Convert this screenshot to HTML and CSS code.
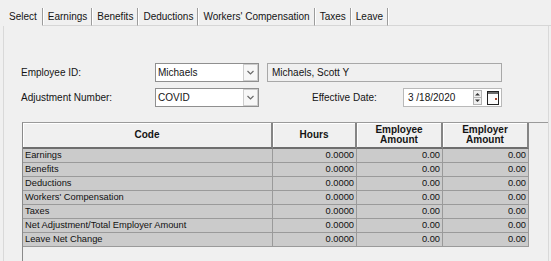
FILE: index.html
```html
<!DOCTYPE html>
<html>
<head>
<meta charset="utf-8">
<link rel="stylesheet" href="styles.css">
</head>
<body>
<div class="tabs">
  <div class="tab active">Select</div>
  <div class="tab">Earnings</div>
  <div class="tab">Benefits</div>
  <div class="tab">Deductions</div>
  <div class="tab">Workers' Compensation</div>
  <div class="tab">Taxes</div>
  <div class="tab">Leave</div>
  <div class="tab-rest"></div>
</div>
<div class="page">
  <div class="form-row">
    <div class="lbl">Employee ID:</div>
    <div class="combo">
      <span class="val">Michaels</span>
      <span class="dd"><svg width="13" height="15" viewBox="0 0 13 15"><polyline points="3.5,6 6.5,9 9.5,6" fill="none" stroke="#6a6a6a" stroke-width="1.2"/></svg></span>
    </div>
    <div class="name-field">Michaels, Scott Y</div>
  </div>
  <div class="form-row second">
    <div class="lbl">Adjustment Number:</div>
    <div class="combo">
      <span class="val">COVID</span>
      <span class="dd"><svg width="13" height="15" viewBox="0 0 13 15"><polyline points="3.5,6 6.5,9 9.5,6" fill="none" stroke="#6a6a6a" stroke-width="1.2"/></svg></span>
    </div>
    <div class="lbl-date">Effective Date:</div>
    <div class="date">
      <span class="val">3 /18/2020</span>
      <svg class="spin" width="9" height="15" viewBox="0 0 9 15"><rect x="0.5" y="0.5" width="8" height="14" fill="#f0f0f0" stroke="#b4b4b4"/><line x1="1" y1="7.5" x2="8" y2="7.5" stroke="#b4b4b4"/><polygon points="2,5.5 4.5,3 7,5.5" fill="#333"/><polygon points="2,9.5 4.5,12 7,9.5" fill="#333"/></svg>
      <svg class="cal" width="12" height="14" viewBox="0 0 12 14"><rect x="0.5" y="0.5" width="11" height="13" fill="#fbfbfb" stroke="#222"/><rect x="1" y="1" width="10" height="2" fill="#6a6a6a"/><rect x="8" y="7" width="2" height="2" fill="#a8442c"/></svg>
    </div>
  </div>
  <div class="grid-panel">
    <table class="grid">
      <colgroup>
        <col class="c-code"><col class="c-hours"><col class="c-amt"><col class="c-amt">
      </colgroup>
      <thead>
        <tr><th>Code</th><th>Hours</th><th>Employee<br>Amount</th><th>Employer<br>Amount</th></tr>
      </thead>
      <tbody>
        <tr><td>Earnings</td><td class="num">0.0000</td><td class="num">0.00</td><td class="num">0.00</td></tr>
        <tr><td>Benefits</td><td class="num">0.0000</td><td class="num">0.00</td><td class="num">0.00</td></tr>
        <tr><td>Deductions</td><td class="num">0.0000</td><td class="num">0.00</td><td class="num">0.00</td></tr>
        <tr><td>Workers' Compensation</td><td class="num">0.0000</td><td class="num">0.00</td><td class="num">0.00</td></tr>
        <tr><td>Taxes</td><td class="num">0.0000</td><td class="num">0.00</td><td class="num">0.00</td></tr>
        <tr><td>Net Adjustment/Total Employer Amount</td><td class="num">0.0000</td><td class="num">0.00</td><td class="num">0.00</td></tr>
        <tr><td>Leave Net Change</td><td class="num">0.0000</td><td class="num">0.00</td><td class="num">0.00</td></tr>
      </tbody>
    </table>
  </div>
</div>
</body>
</html>
```

FILE: styles.css
```css
html, body {
  margin: 0;
  padding: 0;
  background: #f0f0f0;
  width: 551px;
  height: 261px;
  overflow: hidden;
  font-family: "Liberation Sans", Arial, sans-serif;
  font-size: 10px;
  color: #141414;
}

.tabs {
  display: flex;
  padding-top: 8px;
  padding-left: 4px;
}
.tab {
  box-sizing: border-box;
  height: 18px;
  line-height: 17px;
  padding: 0 4px 0 5px;
  border-right: 1px solid #9c9c9c;
  box-shadow: 1px 0 0 #ffffff;
  border-bottom: 1px solid #d6d6d6;
  white-space: nowrap;
}
.tab.active {
  padding-right: 5px;
  border-bottom-color: transparent;
}
.tab-rest {
  flex: 1;
  height: 18px;
  box-sizing: border-box;
  border-bottom: 1px solid #d6d6d6;
}

.page {
  box-sizing: border-box;
  margin-left: 3px;
  width: 546px;
  height: 243px;
  border-left: 1px solid #d9d9d9;
  border-right: 1px solid #d9d9d9;
  padding: 37px 0 0 17px;
  display: flex;
  flex-direction: column;
}

.form-row {
  display: flex;
  align-items: center;
  height: 19px;
}
.form-row.second {
  margin-top: 6px;
}
.lbl {
  width: 134px;
}
.combo {
  box-sizing: border-box;
  width: 104px;
  height: 19px;
  background: #ffffff;
  border: 1px solid #8f8f8f;
  display: flex;
  align-items: center;
  justify-content: space-between;
  padding-left: 2px;
}
.combo .val {
  line-height: 15px;
}
.dd {
  box-sizing: border-box;
  width: 15px;
  height: 17px;
  border: 1px solid #cdcdcd;
  background: #f7f7f7;
  display: flex;
  align-items: center;
  justify-content: center;
}
.name-field {
  box-sizing: border-box;
  margin-left: 8px;
  width: 235px;
  height: 19px;
  line-height: 17px;
  border: 1px solid #a8a8a8;
  padding-left: 4px;
  background: #f0f0f0;
}
.lbl-date {
  margin-left: 53px;
  width: 91px;
}
.date {
  box-sizing: border-box;
  width: 99px;
  height: 19px;
  background: #ffffff;
  border: 1px solid #b9b9b9;
  display: flex;
  align-items: center;
  padding-left: 4px;
}
.date .val {
  flex: 1;
}
.spin {
  margin-right: 5px;
}
.cal {
  margin-right: 2px;
}

.grid-panel {
  flex: 1;
  margin-top: 15px;
  margin-left: 1px;
  border-top: 1px solid #9a9a9a;
  border-left: 1px solid #8a8a8a;
}
.grid {
  border-collapse: separate;
  border-spacing: 0;
  table-layout: fixed;
  width: 506px;
  font-size: 9.3px;
}
.c-code { width: 250px; }
.c-hours { width: 84px; }
.c-amt { width: 86px; }

.grid th {
  box-sizing: border-box;
  height: 26px;
  padding: 0;
  background: #f0f0f0;
  font-size: 10px;
  line-height: 10.5px;
  font-weight: bold;
  color: #141414;
  text-align: center;
  border-right: 2px solid #858585;
  border-bottom: 2px solid #6e6e6e;
  box-shadow: inset 1px 1px 0 #ffffff;
}
.grid td {
  box-sizing: border-box;
  height: 14px;
  padding: 0 2px 0 2px;
  background: #cbcbcb;
  line-height: 13px;
  white-space: nowrap;
  overflow: hidden;
  border-right: 1px solid #9a9a9a;
  border-bottom: 1px solid #9a9a9a;
  color: #111111;
}
.grid td.num {
  text-align: right;
}
```
